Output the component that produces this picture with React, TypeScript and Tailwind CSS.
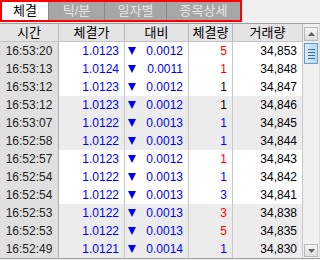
import React from "react";

type Row = { t: string; p: string; d: string; q: string; qc: string; v: string; g: boolean };

const rows: Row[] = [
  { t: "16:53:20", p: "1.0123", d: "0.0012", q: "5", qc: "text-[#ff0000]", v: "34,853", g: false },
  { t: "16:53:13", p: "1.0124", d: "0.0011", q: "1", qc: "text-[#ff0000]", v: "34,848", g: false },
  { t: "16:53:12", p: "1.0123", d: "0.0012", q: "1", qc: "text-black", v: "34,847", g: false },
  { t: "16:53:12", p: "1.0123", d: "0.0012", q: "1", qc: "text-black", v: "34,846", g: true },
  { t: "16:53:07", p: "1.0122", d: "0.0013", q: "1", qc: "text-[#0000ff]", v: "34,845", g: true },
  { t: "16:52:58", p: "1.0122", d: "0.0013", q: "1", qc: "text-[#0000ff]", v: "34,844", g: true },
  { t: "16:52:57", p: "1.0123", d: "0.0012", q: "1", qc: "text-[#ff0000]", v: "34,843", g: false },
  { t: "16:52:54", p: "1.0122", d: "0.0013", q: "1", qc: "text-[#0000ff]", v: "34,842", g: false },
  { t: "16:52:54", p: "1.0122", d: "0.0013", q: "3", qc: "text-[#0000ff]", v: "34,841", g: false },
  { t: "16:52:53", p: "1.0122", d: "0.0013", q: "3", qc: "text-[#ff0000]", v: "34,838", g: true },
  { t: "16:52:53", p: "1.0122", d: "0.0013", q: "5", qc: "text-[#ff0000]", v: "34,835", g: true },
  { t: "16:52:49", p: "1.0121", d: "0.0014", q: "1", qc: "text-[#0000ff]", v: "34,830", g: true },
];

const Tri = () => (
  <svg width="8" height="8" viewBox="0 0 8 8" className="block">
    <polygon points="0,0 8,0 4,8" fill="#0000ff" />
  </svg>
);

export default function App() {
  return (
    <div
      className="w-[320px] h-[260px] bg-[#f0f0f0] overflow-hidden flex flex-col"
      style={{ fontFamily: '"Liberation Sans", "Noto Sans CJK KR", sans-serif' }}
    >
      <div className="h-[23px] flex">
        <div className="w-[242px] h-[22px] border-2 border-[#ff0000] flex bg-[#a6a6a6] text-[13px] leading-[18px]">
          <div className="w-[47px] bg-white text-black flex items-center justify-center border-r border-[#8a8a8a]">체결</div>
          <div className="w-[56px] text-[#e6e6e6] flex items-center justify-center border-r border-[#8a8a8a]">틱/분</div>
          <div className="w-[62px] text-[#e6e6e6] flex items-center justify-center border-r border-[#8a8a8a]">일자별</div>
          <div className="flex-1 text-[#e6e6e6] flex items-center justify-center">종목상세</div>
        </div>
      </div>
      <div className="flex border-t border-[#a0a0a0] border-b">
        <div className="flex flex-col w-[303px]">
          <div className="flex h-[18px] bg-[#e4e4e4] text-[13px] leading-[17px] text-black border-b border-[#c4c4c4]">
            <div className="w-[59px] text-center border-r border-[#b8b8b8]">시간</div>
            <div className="w-[66px] text-center border-r border-[#b8b8b8]">체결가</div>
            <div className="w-[64px] text-center border-r border-[#b8b8b8]">대비</div>
            <div className="w-[44px] text-center border-r border-[#b8b8b8]">체결량</div>
            <div className="w-[70px] text-center border-r border-[#b8b8b8]">거래량</div>
          </div>
          {rows.map((r, i) => (
            <div key={i} className={`flex h-[18px] text-[12px] leading-[18px] ${r.g ? "bg-[#ececec]" : "bg-white"}`}>
              <div className="w-[59px] bg-[#e0e0e0] text-[#222222] text-center border-r border-[#b0b0b0]">{r.t}</div>
              <div className="w-[66px] text-right pr-[5px] text-[#0000ff] border-r border-[#c8c8c8]">{r.p}</div>
              <div className="w-[64px] flex items-center pl-[3px] pr-[5px] text-[#0000ff] border-r border-[#c8c8c8]">
                <Tri />
                <span className="flex-1 text-right">{r.d}</span>
              </div>
              <div className={`w-[44px] text-right pr-[5px] border-r border-[#c8c8c8] ${r.qc}`}>{r.q}</div>
              <div className="w-[70px] text-right pr-[5px] text-black border-r border-[#c8c8c8]">{r.v}</div>
            </div>
          ))}
        </div>
        <div className="w-[17px] bg-[#f0f0f0] flex flex-col items-center pt-[3px] pb-[1px] border-r border-[#dcdcdc]">
          <div className="w-[14px] h-[14px] border border-[#b8b8b8] bg-gradient-to-b from-[#f6f6f6] to-[#dcdcdc] flex items-center justify-center">
            <svg width="7" height="4" viewBox="0 0 7 4"><polygon points="0,4 7,4 3.5,0" fill="#606060" /></svg>
          </div>
          <div className="mt-[2px] w-[14px] h-[21px] border border-[#6a9cc8] bg-gradient-to-r from-[#d6eafa] to-[#b8d8f2] flex flex-col items-center justify-center gap-[2px]">
            <div className="w-[7px] h-[1px] bg-[#3c6a94]" />
            <div className="w-[7px] h-[1px] bg-[#3c6a94]" />
            <div className="w-[7px] h-[1px] bg-[#3c6a94]" />
            <div className="w-[7px] h-[1px] bg-[#3c6a94]" />
          </div>
          <div className="flex-1" />
          <div className="w-[14px] h-[13px] border border-[#b8b8b8] bg-gradient-to-b from-[#f6f6f6] to-[#dcdcdc] flex items-center justify-center">
            <svg width="7" height="4" viewBox="0 0 7 4"><polygon points="0,0 7,0 3.5,4" fill="#606060" /></svg>
          </div>
        </div>
      </div>
    </div>
  );
}
